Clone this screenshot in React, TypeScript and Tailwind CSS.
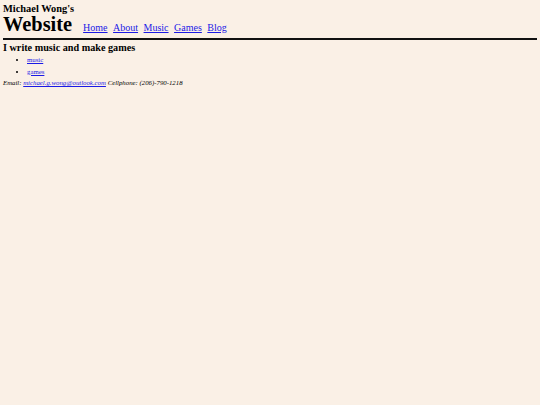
export default function App() {
  const links = ['Home', 'About', 'Music', 'Games', 'Blog'];

  return (
    <div className="min-h-screen bg-[#faf0e6] px-[3px] text-black" style={{ fontFamily: '"Liberation Serif", "Times New Roman", serif' }}>
      <header className="border-b-[2.5px] border-[#111] pb-[3px] pt-[3px]">
        <p className="text-[10.4px] font-bold leading-[11px]">Michael Wong's</p>
        <div className="flex items-baseline gap-[11px]">
          <h1 className="text-[20.4px] font-bold leading-[20px]">Website</h1>
          <nav className="flex items-baseline gap-[5.5px] text-[10px]">
            {links.map((l) => (
              <a key={l} href="#" className="text-[#1a1ae6] underline">
                {l}
              </a>
            ))}
          </nav>
        </div>
      </header>

      <main>
        <h2 className="pt-[2px] text-[10.2px] font-bold leading-[12px]">I write music and make games</h2>
        <ul className="list-disc pl-[24px] text-[6.8px] leading-[11.5px]">
          <li>
            <a href="#" className="text-[#1a1ae6] underline">music</a>
          </li>
          <li>
            <a href="#" className="text-[#1a1ae6] underline">games</a>
          </li>
        </ul>
        <p className="text-[6.8px] italic leading-[12px]">
          Email:{' '}
          <a href="#" className="text-[#1a1ae6] underline">michael.g.wong@outlook.com</a>{' '}
          Cellphone: (206)-790-1218
        </p>
      </main>
    </div>
  );
}
